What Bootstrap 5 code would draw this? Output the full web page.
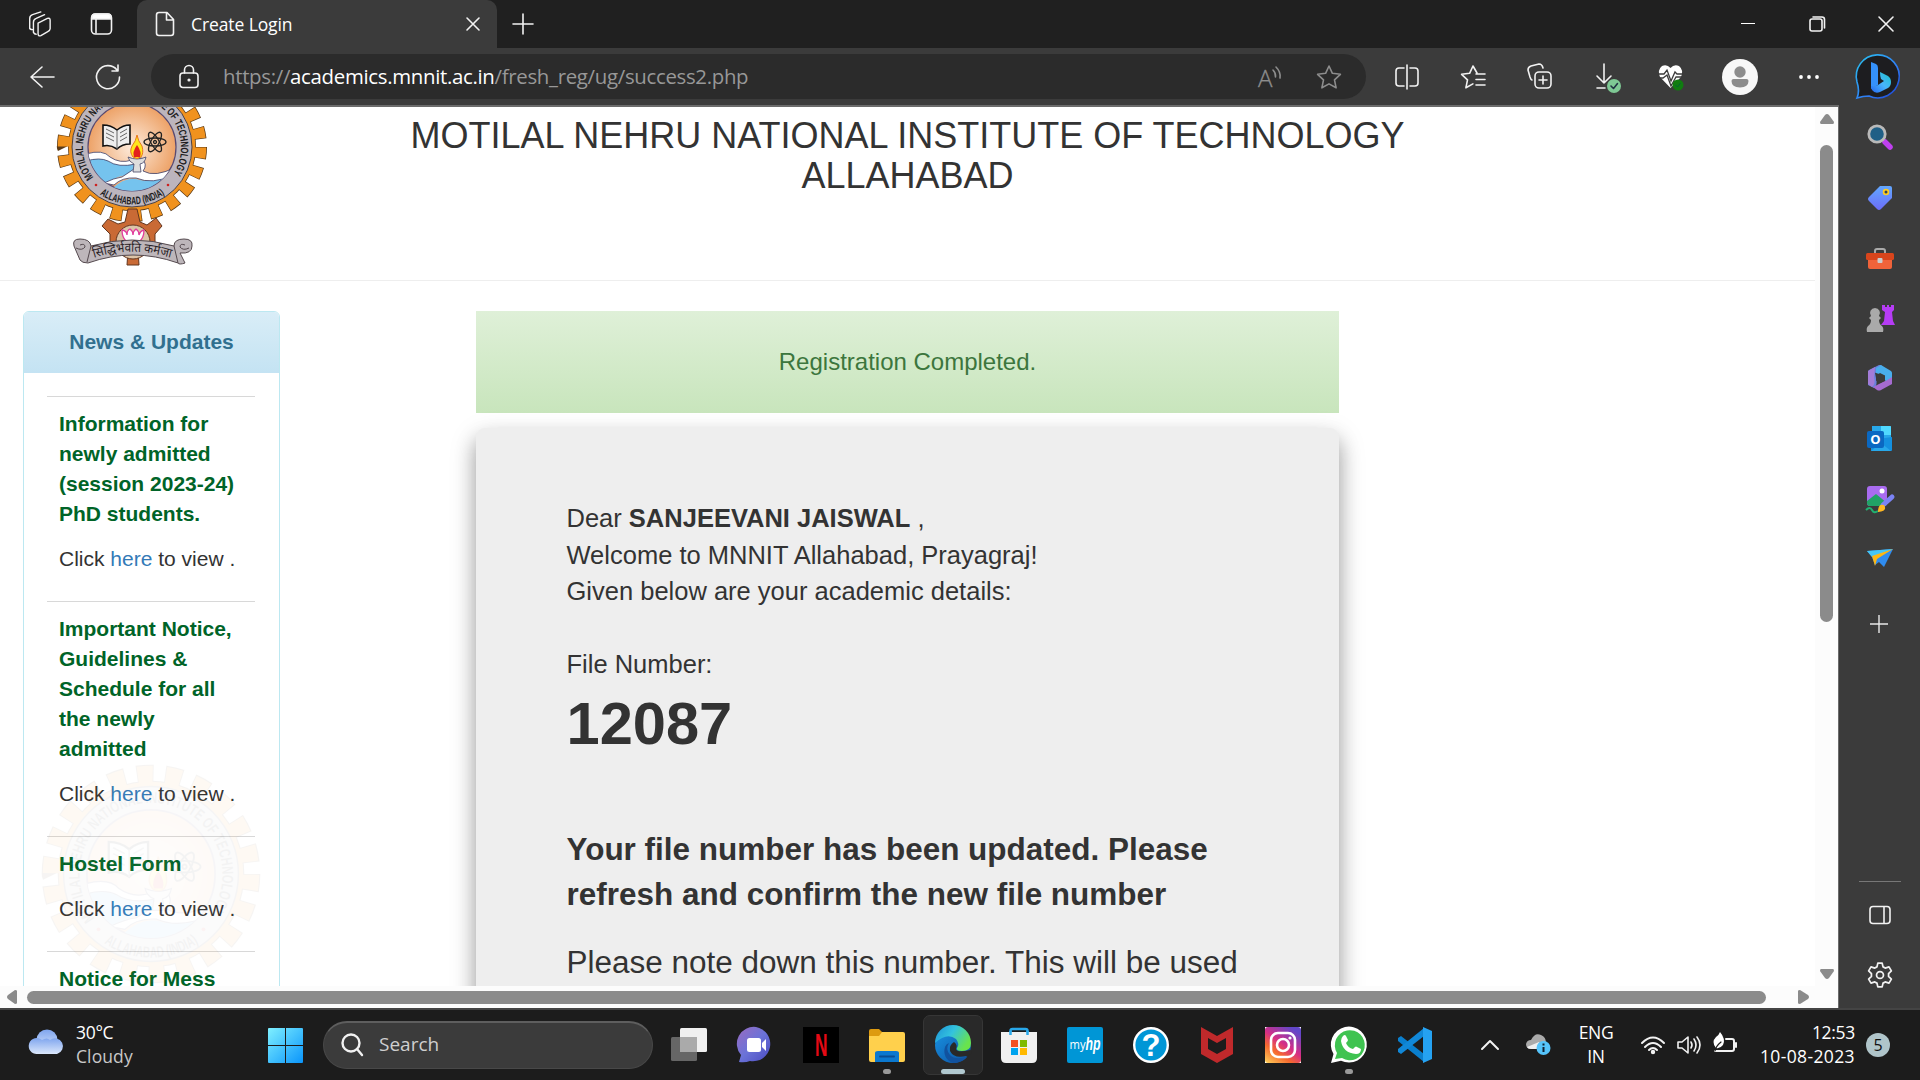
<!DOCTYPE html>
<html lang="en">
<head>
<meta charset="utf-8">
<title>Create Login</title>
<link href="https://cdn.jsdelivr.net/npm/bootstrap@5.3.0/dist/css/bootstrap.min.css" rel="stylesheet">
<style>
html,body{height:100%;overflow:hidden}
body{font-family:"Open Sans","Noto Sans",sans-serif;background:#1c1c1c;color:#fff}
svg{display:block;flex:none;overflow:visible}
.ic{fill:none;stroke:#f2f2f2;stroke-width:1.6;stroke-linecap:round;stroke-linejoin:round}
.dim{stroke:#8d8d8d}
.titlebar{height:48px;background:#202020}
.tools{height:57px;background:#3b3b3b}
.cell{display:flex;align-items:center;justify-content:center;flex:none}
.w66{width:66px}
.tab{width:360px;background:#3b3b3b;border-radius:10px 10px 0 0;padding-left:18px;font-size:17.5px;letter-spacing:-.1px}
.address{width:1215px;height:45px;border-radius:23px;background:#2b2b2b;margin-left:16px;padding-left:29px;font-size:20.4px;letter-spacing:-.31px;color:#989898}
.address b{color:#fff;font-weight:400}
.middle{height:903px;background:#3b3b3b}
.viewer{width:1839px;border-top:2px solid #6b6b6b;border-right:1px solid #6b6b6b}
.page{width:1815px;height:879px;background:#fff;color:#333;font-family:"Liberation Sans",Arial,sans-serif;position:relative;overflow:hidden}
.vbar{width:23px;background:#fcfcfc;padding:7px 4px 7px 5px}
.vthumb{width:13px;height:477px;border-radius:7px;background:#8b8b8b;margin-top:21px}
.hbar{height:22px;background:#fcfcfc;padding:0 29px 0 7px}
.hthumb{width:1739px;height:13px;border-radius:7px;background:#8b8b8b;margin-left:10px}
.masthead{height:174px;border-bottom:1px solid #eee;position:relative}
.masthead h1{width:1080px;font-size:36px;line-height:40px;font-weight:400;margin:9px auto 0;text-align:center}
.crest{position:absolute;left:40px;top:0}
.watermark{position:absolute;left:41px;top:657px;opacity:.048}
.news{width:257px;height:700px;border:1px solid #bce8f1;border-radius:6px;margin-left:23px;font-size:21px;line-height:30px;flex:none;background:transparent;color:#333}
.news-title{height:61px;line-height:59px;background:linear-gradient(#d9edf7,#c4e3f3);border-radius:5px 5px 0 0;color:#31708f;font-weight:700;text-align:center}
.notice{border-top:1px solid #d8d8d8;margin:0 24px 0 23px;padding:12px 11px 27px 12px}
.notice strong{display:block;color:#006428;margin-bottom:15px}
.notice a{color:#337ab7;text-decoration:none}
.main{width:863px;margin-left:196px}
.done{height:102px;background:linear-gradient(#dff0d8,#c8e5bc);color:#3c763d;font-size:24px;margin-bottom:15px}
.letter{height:700px;background:#eee;border-radius:9px;box-shadow:0 12px 20px rgba(0,0,0,.28),0 9px 28px rgba(0,0,0,.17);padding:72px 90.5px;font-size:25.5px;line-height:36.57px}
.fileno{font-size:59.6px;line-height:86px;font-weight:700;margin-top:-2px}
.update{font-size:31.48px;line-height:45.3px;font-weight:700;margin:60px 0 23px}
.below{font-size:31.48px;line-height:45.3px;white-space:nowrap}
.side{width:81px}
.side .cell{height:60px}
.taskbar{height:72px;border-top:2px solid #444;background:#1c1c1c}
.tsm{font-size:17.5px;line-height:24px;letter-spacing:-.3px;position:relative;top:-1.5px}
.searchpill{width:330px;height:48px;border-radius:24px;background:#3b3b3b;border:1px solid #484848;border-top:2px solid #5e5e5e;color:#cfcfcf;font-size:19px;padding-left:16px;letter-spacing:0}
.searchpill span{margin-top:-2px}
.app{width:66px;height:60px;position:relative;display:flex;align-items:center;justify-content:center;flex:none}
.active-app::before{content:"";position:absolute;left:3px;top:0;width:60px;height:60px;border-radius:7px;background:#292929;border:1px solid #363636}
.app svg{position:relative}
.run::after{content:"";position:absolute;bottom:1px;left:29px;width:8px;height:5px;border-radius:3px;background:#999}
.active-app::after{left:21px;width:24px;background:#b0c8cf}
.bell{width:24px;height:24px;border-radius:50%;background:#b0c5ca;color:#111;font-size:16px;line-height:22px}
</style>
<script src="https://cdn.jsdelivr.net/npm/bootstrap@5.3.0/dist/js/bootstrap.bundle.min.js"></script>
</head>
<body class="d-flex flex-column">

<div class="titlebar d-flex align-items-stretch">
  <div class="cell" style="width:78px"><svg class="ic" width="26" height="26" viewBox="0 0 28 28" style="stroke-width:1.500"><path d="M13 13l10-5q3-1 3 2v9q0 2-3 3.500l-7 4q-3 1-3-2z"/><path d="M8 23V12q0-3 3-4l9-4M4 19V8q0-3 3-4l9-3M11 25q-2 0-3-2M7 20q-3 0-3-2"/></svg></div>
  <div class="cell" style="width:48px"><svg class="ic" width="24" height="24" viewBox="0 0 24 24"><rect x="1.500" y="2" width="20" height="20" rx="4"/><path d="M2 7V5q0-3 3-3h13q3 0 3 3v2z" fill="#fff"/><path d="M6 7v14"/></svg></div>
  <div class="tab d-flex align-items-center" style="margin-left:11px">
    <svg class="ic" width="20" height="26" viewBox="0 0 20 26"><path d="M4 1.500h8l6.500 7V22q0 2.500-2.500 2.500H4Q1.500 24.500 1.500 22V4Q1.500 1.500 4 1.500zM11.500 2v7h7"/></svg>
    <span style="margin-left:16px">Create Login</span>
    <svg class="ic ms-auto" style="margin-right:18px" width="12" height="12" viewBox="0 0 12 12"><path d="M0 0l12 12M12 0L0 12"/></svg>
  </div>
  <div class="cell" style="width:51px"><svg class="ic" width="20" height="20" viewBox="0 0 20 20"><path d="M10 0v20M0 10h20"/></svg></div>
  <div class="d-flex ms-auto">
    <div class="cell" style="width:69px"><svg width="14" height="14"><path d="M0 6.500h14" stroke="#fff"/></svg></div>
    <div class="cell" style="width:69px"><svg class="ic" width="16" height="16" viewBox="0 0 16 16"><rect x="1" y="3" width="12" height="12" rx="2"/><path d="M4 1h9q2.500 0 2.500 2.500V12"/></svg></div>
    <div class="cell" style="width:69px"><svg class="ic" width="14" height="14" viewBox="0 0 14 14"><path d="M0 0l14 14M14 0L0 14"/></svg></div>
  </div>
</div>

<div class="tools d-flex align-items-center">
  <div class="cell" style="width:83px"><svg class="ic" width="24" height="22" viewBox="0 0 24 22"><path d="M12 1L1 11l11 10M1 11h23"/></svg></div>
  <div class="cell" style="width:50px"><svg class="ic" width="26" height="26" viewBox="0 0 26 26"><path d="M22 6A11.500 11.500 0 1 0 24.500 13M23 1v6h-6"/></svg></div>
  <div class="address d-flex align-items-center" style="margin-left:18px">
    <svg class="ic" width="18" height="24" viewBox="0 0 18 24"><rect x="0" y="8" width="18" height="14.500" rx="3"/><path d="M4.500 8V5a4.500 4.500 0 0 1 9 0v3"/><circle cx="9" cy="15" r=".8"/></svg>
    <span id="url" style="margin-left:25px">https://<b>academics.mnnit.ac.in</b>/fresh_reg/ug/success2.php</span>
    <svg class="ic dim ms-auto" width="22" height="24" viewBox="0 0 22 24"><text x="-1" y="22" font-size="24" font-family="Open Sans" font-weight="300" fill="#8d8d8d" stroke-width=".3">A</text><path d="M14 5q3 3 2.500 7M17 2q5 5 4 11"/></svg>
    <svg class="ic dim" style="margin:0 25px 0 36px" width="24" height="24" viewBox="0 0 24 24"><path d="M12 1l3.400 7.300 8 1-5.900 5.500 1.600 8L12 18.900l-7.100 3.900 1.600-8L.6 9.300l8-1z"/></svg>
  </div>
  <div class="cell w66" style="margin-left:8px"><svg class="ic" width="24" height="26" viewBox="0 0 24 26"><path d="M9 4H4Q1 4 1 7v12q0 3 3 3h5M15 4h5q3 0 3 3v12q0 3-3 3h-5M12 1v24"/></svg></div>
  <div class="cell w66"><svg class="ic" width="25" height="24" viewBox="0 0 25 24"><path d="M16 8L12 1 8.600 8.300l-8 1 5.900 5.500-1.600 8 7-3.900M15 9h9M15 14.500h9M15 20h9"/></svg></div>
  <div class="cell w66"><svg class="ic" width="25" height="25" viewBox="0 0 25 25"><rect x="8" y="8" width="16" height="16" rx="4"/><path d="M16 12v8M12 16h8M5 16q-1 0-2-3L1 6Q1 3 4 2l8-2q3 0 4 4"/></svg></div>
  <div class="cell" style="width:72px"><svg class="ic" width="26" height="28" viewBox="0 0 26 28"><path d="M9 1v19M2 13l7 7 7-7M2 25h8"/><circle cx="19" cy="23" r="7" fill="#7ec894" stroke="none"/><path d="M16 23l2.500 2.500 4-5" stroke="#234"/></svg></div>
  <div class="cell" style="width:54px"><svg width="26" height="26" viewBox="0 0 26 26"><path d="M12.500 24L2 13Q-1 6 4 2q5-2 8.500 2Q16 0 21 2q5 4 2 11z" fill="#fff"/><path d="M0 10h6l3-4 4 11 4-9 2 2h6M0 14h5l4-3 4 11 5-9h7" fill="none" stroke="#3b3b3b" stroke-width="1.300"/><circle cx="20" cy="21" r="5.500" fill="#107c10"/><path d="M17.500 21l2 2 3-4" fill="none" stroke="#063"/></svg></div>
  <div class="cell" style="width:84px"><svg width="36" height="36"><circle cx="18" cy="18" r="18" fill="#f8f8f8"/><circle cx="18" cy="13" r="5.700" fill="#8d8d8d"/><path d="M9.500 22q0-2 2-2h13q2 0 2 2 0 6-8.500 6.500-8.500-.5-8.500-6.500z" fill="#8d8d8d"/></svg></div>
  <div class="cell" style="width:54px"><svg width="22" height="6" fill="#fff"><circle cx="3" cy="3" r="1.900"/><circle cx="11" cy="3" r="1.900"/><circle cx="19" cy="3" r="1.900"/></svg></div>
  <div class="cell" style="width:84px"><svg width="46" height="46" viewBox="0 0 46 46"><defs><linearGradient id="bg" x1="0" y1="0" x2="1" y2="1"><stop stop-color="#29c5f0"/><stop offset=".6" stop-color="#2f7df5"/><stop offset="1" stop-color="#1b3fd0"/></linearGradient><linearGradient id="bs" x1="0" y1="1" x2="1" y2="0"><stop stop-color="#2468f2"/><stop offset=".5" stop-color="#49b4fb"/><stop offset="1" stop-color="#18c3c8"/></linearGradient></defs><path d="M2 44q3-7 0-16A21.500 21.500 0 1 1 14 42Q8 42 2 44z" fill="#1d1d20" stroke="url(#bg)" stroke-width="1.600"/><path d="M16 8l5 2q2 1 2 4v17l-7 4z" fill="#3591fb"/><path d="M25 18l8 4q3 2 3 6 0 4-3 6l-8 4q-5 2-8-2-1-2-1-4 4 1 7-1l6-4-3-2q-1-3-1-7z" fill="url(#bs)"/></svg></div>
</div>

<div class="middle d-flex">
  <div class="viewer d-flex flex-column">
    <div class="d-flex">
      <div class="page">
        <header class="masthead d-flex">
          <div class="crest"><svg width="200" height="173" viewBox="40 107 200 173">
            <defs>
              <radialGradient id="disc"><stop stop-color="#fdebdc"/><stop offset="1" stop-color="#eda267"/></radialGradient>
              <path id="arcTop" d="M-38.500 30.500A49 49 0 1 1 38.500 30.500"/>
              <path id="arcBot" d="M-40 41A57 57 0 0 0 40 41"/>
              <clipPath id="dc"><circle r="44"/></clipPath>
              <g id="gear">
                <circle r="66" fill="none" stroke="#5b3a16" stroke-width="18" pathLength="220" stroke-dasharray="5.900 4.100"/>
                <circle r="64" fill="#5b3a16"/>
                <circle r="63.300" fill="#f0921e"/>
                <circle r="66" fill="none" stroke="#f0921e" stroke-width="16.500" pathLength="220" stroke-dasharray="5.300 4.700" stroke-dashoffset="-.3"/>
                <circle r="60" fill="#bcb5bd" stroke="#4a4044" stroke-width="1"/>
                <circle r="44" fill="url(#disc)" stroke="#5a4a70" stroke-width="1.200"/>
                <g clip-path="url(#dc)">
                  <path d="M-44 9Q-28 3-22 12-12 19 0 15L9 17Q0 28-14 30L-26 36-44 28z" fill="#75c3ee"/>
                  <path d="M-20 42Q-8 30 4 32 20 38 42 24L30 44H-20z" fill="#75c3ee"/>
                  <path d="M-46 7Q-29 2-22 10-12 17 0 13l10-2q6 7 1 13 12 7 33-4l-2 8Q20 38 4 31-10 30-18 38l-10-2Q-18 31-10 30-4 26 2 22L4 17Q-14 21-24 14-32 10-46 14z" fill="#fff" stroke="#3b3d66" stroke-width=".8"/>
                </g>
                <path d="M-29-22q8 0 14 5 6-5 13-5V-3q-8 0-13 5-7-5-14-3z" fill="#eee" stroke="#111" stroke-width="1.600"/>
                <path d="M-15-17V2M-26-18l8 4M-26-14l8 4M-26-10l8 4M-5-18l-7 4M-5-14l-7 4M-5-10l-7 4" stroke="#666" fill="none"/>
                <g fill="none" stroke="#222" stroke-width="1.300" transform="translate(23 -5)"><ellipse rx="11" ry="4"/><ellipse rx="11" ry="4" transform="rotate(60)"/><ellipse rx="11" ry="4" transform="rotate(120)"/><circle r="1.500"/></g>
                <path d="M-4 10q9 4 18 0-1 6-6 7l1 8H1l1-8q-5-2-6-7z" fill="#ddd" stroke="#446" stroke-width=".8"/>
                <path d="M5-12q1 6 5 11 2 7-1 11-4 3-8 0-4-5-1-11 4-5 5-11z" fill="#ffe51c" stroke="#e9761c"/><path d="M5-2q5 7 3 12H2Q0 5 5-2z" fill="#e3211c"/>
                <g font-family="Liberation Sans" font-weight="700" font-size="10.800" fill="#201c20"><text><textPath href="#arcTop" textLength="214" lengthAdjust="spacingAndGlyphs">MOTILAL NEHRU NATIONAL INSTITUTE OF TECHNOLOGY</textPath></text><text><textPath href="#arcBot" startOffset="10" textLength="69" lengthAdjust="spacingAndGlyphs">ALLAHABAD (INDIA)</textPath></text></g>
                <circle cx="-36" cy="38" r="1.300" fill="#c22"/><circle cx="36" cy="38" r="1.300" fill="#c22"/>
              </g>
            </defs>
            <use href="#gear" transform="translate(132 147)"/>
            <path d="M128 209h9l3 13 7 3 9-7 6 8-7 8v12l-17 4 1 15h-12l1-15-18-4v-12l-8-8 6-7 10 5 7-2z" fill="#c96a35" stroke="#63361f"/>
            <circle cx="133" cy="242" r="17" fill="#dcc4a8" stroke="#63361f"/>
            <path d="M122 230q5 1 5 5 0-5 3-6 3 2 3 6 0-4 3-6 3 2 3 6 1-4 5-5 0 8-5 12h-12q-5-4-5-12z" fill="#fff" stroke="#e23a9c" stroke-width="1.300"/>
            <path d="M74 246q-2-7 6-7 10 0 11 7 41-12 83 0 0-7 10-7 9 0 8 7 0 8-12 7l5 10q-6 2-7 0-45-16-90 0-6 0-8-3z" fill="#bdb6ba" stroke="#54494e"/>
            <path d="M91 246l-4 16M174 246l4 17M76 248q6 3 9-1 0-4-5-2M189 248q-6 3-9-1 0-4 5-2" fill="none" stroke="#54494e"/>
            <path id="ribbonBase" d="M94 258q38-13 80 1" fill="none"/>
            <text font-family="Noto Sans Devanagari,Noto Sans,sans-serif" font-size="13" fill="#2a2226"><textPath href="#ribbonBase" textLength="78" lengthAdjust="spacingAndGlyphs">सिद्धिर्भवति कर्मजा</textPath></text>
          </svg></div>
          <h1>MOTILAL NEHRU NATIONAL INSTITUTE OF TECHNOLOGY ALLAHABAD</h1>
        </header>
        <div class="watermark"><svg width="220" height="220" viewBox="-75.500 -75.500 151 151"><use href="#gear"/></svg></div>
        <div class="d-flex align-items-start" style="padding-top:30px">
          <aside class="news">
            <div class="news-title">News &amp; Updates</div>
            <div style="padding-top:23px">
              <div class="notice"><strong>Information for newly admitted (session 2023-24) PhD students.</strong>Click <a href="#">here</a> to view .</div>
              <div class="notice"><strong>Important Notice, Guidelines &amp; Schedule for all the newly admitted</strong>Click <a href="#">here</a> to view .</div>
              <div class="notice"><strong>Hostel Form</strong>Click <a href="#">here</a> to view .</div>
              <div class="notice"><strong>Notice for Mess</strong></div>
            </div>
          </aside>
          <main class="main">
            <div class="done d-flex align-items-center justify-content-center">Registration Completed.</div>
            <div class="letter">
              <div>Dear <b>SANJEEVANI JAISWAL</b> ,<br>Welcome to MNNIT Allahabad, Prayagraj!<br>Given below are your academic details:<br><br>File Number:</div>
              <div class="fileno">12087</div>
              <div class="update">Your file number has been updated. Please refresh and confirm the new file number</div>
              <div class="below">Please note down this number. This will be used</div>
            </div>
          </main>
        </div>
      </div>
      <div class="vbar d-flex flex-column">
        <svg width="14" height="10" fill="#8b8b8b"><path d="M7 0q1 0 2 1l5 7q0 2-1 2H1Q0 10 0 8l5-7q1-1 2-1z"/></svg>
        <div class="vthumb"></div>
        <svg class="mt-auto" width="14" height="10" fill="#8b8b8b"><path d="M7 10q1 0 2-1l5-7q0-2-1-2H1Q0 0 0 2l5 7q1 1 2 1z"/></svg>
      </div>
    </div>
    <div class="hbar d-flex align-items-center">
      <svg width="10" height="14" fill="#8b8b8b"><path d="M0 7q0-1 1-2l7-5q2 0 2 1v12q0 1-2 1L1 9Q0 8 0 7z"/></svg>
      <div class="hthumb"></div>
      <svg class="ms-auto" width="11" height="14" fill="#8b8b8b"><path d="M11 7q0-1-1-2L2 0Q0 0 0 1v12q0 1 2 1l8-5q1-1 1-2z"/></svg>
    </div>
  </div>

  <div class="side d-flex flex-column" style="padding-top:2px">
    <div class="cell"><svg width="26" height="26" viewBox="0 0 26 26"><path d="M18 18l5 5" stroke="#c040f0" stroke-width="5.500" stroke-linecap="round"/><circle cx="10" cy="10" r="8.200" fill="#1f5f86" stroke="#b9b9b9" stroke-width="2.800"/></svg></div>
    <div class="cell" style="height:62px"><svg width="26" height="26" viewBox="0 0 26 26"><defs><linearGradient id="tg" x2="0" y2="1"><stop stop-color="#62a8ff"/><stop offset="1" stop-color="#6c6cf8"/></linearGradient></defs><path d="M13 1h10q2 0 2 2v10L14 24q-2 2-4 0L2 16q-2-2 0-4z" fill="url(#tg)"/><circle cx="19" cy="7" r="2.400" fill="#345" stroke="#ffcc20" stroke-width="1.800"/></svg></div>
    <div class="cell"><svg width="28" height="24" viewBox="0 0 28 24"><path d="M9 7V4q0-2 2-2h6q2 0 2 2v3" fill="none" stroke="#aaa" stroke-width="2"/><path d="M2 11h24v9q0 2-2 2H4q-2 0-2-2z" fill="#f0633a"/><rect x="0" y="6" width="28" height="7" rx="1.500" fill="#d9451c"/><rect x="11.500" y="11" width="5" height="5" rx="1" fill="#ccc"/></svg></div>
    <div class="cell" style="height:58px"><svg width="28" height="28" viewBox="0 0 28 28"><path d="M16 1h3v2h2V1h2v2h2V1h3v5l-2 2 1 9 2 4H15l3-4 1-9-3-2z" fill="#b63cf5"/><path d="M9 4a5 5 0 0 1 4 8l2 2-2 2q0 4 3 6 2 2 1 6H1q-1-4 1-6 3-2 3-6l-2-2 2-2A5 5 0 0 1 9 4z" fill="#aaa"/></svg></div>
    <div class="cell" style="height:62px"><svg width="26" height="28" viewBox="0 0 26 28"><path d="M12 1L2 6q-1 1-1 2v13l6 3q4-3 2-10L8 9l9-3-3-5z" fill="#6a80dd"/><path d="M8 3L1 7v13l4 3q4-3 2-10z" fill="#a37cd8"/><path d="M14 1l10 6q1 1 1 2v11q-5 1-7-4V12L9 9V4z" fill="#49aeec"/><path d="M25 13v7l-11 6q-2 1-4 0l-4-3 10-5q5-2 9-5z" fill="#a66bd0"/><path d="M13 9l5 2.500v5L13 19l-4-2.500v-5z" fill="#3b3b3b"/></svg></div>
    <div class="cell"><svg width="26" height="26" viewBox="0 0 26 26"><path d="M5 0h18q1 0 1 1v15H5z" fill="#28a8ea"/><path d="M14 0h9q1 0 1 1v8H14z" fill="#50d9ff"/><path d="M4 14l21-3v13q0 1-1 1H4z" fill="#1490df"/><path d="M4 25h20l-10-8z" fill="#28a8ea"/><rect x="0" y="5" width="17" height="17" rx="2" fill="#0a68c2"/><text x="8.500" y="18" text-anchor="middle" font-family="Open Sans" font-weight="700" font-size="13" fill="#fff">O</text></svg></div>
    <div class="cell" style="height:59px"><svg width="28" height="28" viewBox="0 0 28 28"><rect x="1" y="1" width="20" height="20" rx="3" fill="#a96cf0"/><path d="M1 16l9-7 11 9q0 3-3 3H4q-3 0-3-3z" fill="#21a366"/><circle cx="16" cy="6" r="2.500" fill="#fff"/><path d="M0 25q4-4 6 0t6 1" stroke="#21b070" stroke-width="2" fill="none"/><path d="M17 20l9-8" stroke="#7b83f5" stroke-width="5" stroke-linecap="round"/><path d="M12 27q0-9 6-7 4 6-6 7z" fill="#ffb822"/></svg></div>
    <div class="cell"><svg width="26" height="20" viewBox="0 0 26 20"><path d="M0 3l26-2-9 18-5-5-4 3-3-8z" fill="#2f8cf0"/><path d="M0 3l26-2L5 9z" fill="#45c6f5"/><path d="M26 1L5 8l3 10 2-7z" fill="#fdb714"/></svg></div>
    <div class="cell" style="height:71px;padding-right:2px"><svg width="18" height="18"><path d="M9 0v18M0 9h18" stroke="#e8e8e8" stroke-width="1.400"/></svg></div>
    <div class="mt-auto mx-auto" style="width:42px;height:1px;background:#777"></div>
    <div class="cell" style="height:66px"><svg class="ic" width="22" height="20" viewBox="0 0 22 20"><rect x="1" y="1.500" width="20" height="17" rx="3"/><path d="M15 2v16"/></svg></div>
    <div class="cell" style="height:54px;margin-bottom:6px"><svg class="ic" width="26" height="26" viewBox="0 0 24 24"><circle cx="12" cy="12" r="3.200"/><path d="M10 1h4l.8 3.500 2 1.100L20.300 4.500l2.200 3.700-2.600 2.500v2.600l2.600 2.500-2.200 3.700-3.500-1.100-2 1.100L14 23h-4l-.8-3.500-2-1.100-3.500 1.100-2.200-3.700 2.600-2.500v-2.600L1.500 8.200l2.200-3.700 3.500 1.100 2-1.100z"/></svg></div>
  </div>
</div>

<div class="taskbar d-flex align-items-center">
  <div class="d-flex align-items-center" style="width:268px;padding-left:29px">
    <svg width="36" height="26" viewBox="0 0 36 26" style="margin-top:-7px"><defs><linearGradient id="cg" x2="0" y2="1"><stop stop-color="#7fa5ee"/><stop offset="1" stop-color="#dbe7fb"/></linearGradient></defs><circle cx="18" cy="11" r="10.500" fill="url(#cg)"/><path d="M8 25a8 8 0 1 1 5-14q5-3 8 0a8 8 0 1 1 7 14z" fill="url(#cg)"/></svg>
    <div class="tsm" style="margin-left:11px">30°C<br><span style="color:#c8c8c8;letter-spacing:.1px">Cloudy</span></div>
  </div>
  <svg width="35" height="35" viewBox="0 0 35 35"><defs><linearGradient id="wg" x2="1" y2="1"><stop stop-color="#7ff0ff"/><stop offset="1" stop-color="#0a95fb"/></linearGradient></defs><path fill="url(#wg)" d="M1 0h16v17H0V1q0-1 1-1zM18 0h16q1 0 1 1v16H18zM0 18h17v17H1q-1 0-1-1zM18 18h17v16q0 1-1 1H18z"/></svg>
  <div class="searchpill d-flex align-items-center" style="margin-left:20px">
    <svg class="ic" width="24" height="24" viewBox="0 0 24 24" style="stroke-width:2.400;margin-top:-2px"><circle cx="11" cy="10" r="8.500"/><path d="M17 16l5 6"/></svg>
    <span style="margin-left:15px">Search</span>
  </div>
  <div class="d-flex" style="margin-left:3px">
    <div class="app"><svg width="36" height="36"><rect x="0" y="10" width="26" height="24" rx="1.500" fill="#666"/><rect x="9" y="1" width="27" height="24" rx="1.500" fill="#f0f0f0"/><path d="M9 10h17v15H9z" fill="#aaa"/></svg></div>
    <div class="app"><svg width="36" height="36"><defs><linearGradient id="tm" x2="1" y2="1"><stop stop-color="#9a6bc0"/><stop offset=".5" stop-color="#6b73d8"/><stop offset="1" stop-color="#4a4ac0"/></linearGradient></defs><path transform="translate(1)" d="M18 0a17 17 0 1 1-6 34q-5 2-11 1l2-7A17 17 0 0 1 18 0z" fill="url(#tm)"/><rect x="10" y="11" width="14" height="14" rx="2.500" fill="#fff"/><path d="M25 16l4-4v12l-4-4z" fill="#fff"/></svg></div>
    <div class="app"><svg width="36" height="36"><path d="M0 0h36v36H0z" fill="#000"/><text x="12" y="29" textLength="12.500" lengthAdjust="spacingAndGlyphs" font-family="Liberation Sans" font-weight="700" font-size="31" fill="#e50914">N</text></svg></div>
    <div class="app run"><svg width="36" height="36"><path d="M0 4q0-2 2-2h8l4 4v4H0z" fill="#dd9a10"/><path d="M13 5h21q2 0 2 2v26q0 2-2 2H2q-2 0-2-2V9h10z" fill="#ffd04c"/><path d="M6 35V26q0-2 3-2h18q3 0 3 2v9z" fill="#0b78cf"/><path d="M11 29.500h14" stroke="#0a4d91" stroke-width="2" stroke-linecap="round"/></svg></div>
    <div class="app run active-app"><svg width="36" height="36" viewBox="0 0 36 36"><defs><linearGradient id="eg" x1="0" x2="1" y2=".5"><stop stop-color="#1b8fd8"/><stop offset=".5" stop-color="#33c3de"/><stop offset="1" stop-color="#69e34c"/></linearGradient><linearGradient id="eb" x2="1" y2="1"><stop stop-color="#1996e6"/><stop offset="1" stop-color="#0c4f9f"/></linearGradient></defs><circle cx="18" cy="18" r="18" fill="url(#eb)"/><path d="M0 16A18 18 0 0 1 36 16q0 8-9 8-6 0-5-3 3-4-1-9Q12 5 0 16z" fill="url(#eg)"/><path d="M14 16q-4 6 1 12 6 6 18 1-5 7-15 7Q7 31 10 20q1-3 4-4z" fill="#11529f"/><path d="M19 15q4 3 2 7 1 4 14 1l2 2-4 5-2-1q-12 3-16-5-1-6 4-9z" fill="#292929"/></svg></div>
    <div class="app"><svg width="36" height="36"><path d="M9.500 8V4q0-2 2-2h13q2 0 2 2v4" fill="none" stroke="#28a8ea" stroke-width="2.500"/><path d="M0 5h36v26q0 5-5 5H5q-5 0-5-5z" fill="#f0f0f0"/><path d="M9.500 8V4M26.500 8V4" stroke="#28a8ea" stroke-width="2.500"/><path d="M10 13h7v7h-7z" fill="#f25022"/><path d="M19 13h7v7h-7z" fill="#7fba00"/><path d="M10 21h7v7h-7z" fill="#00a4ef"/><path d="M19 21h7v7h-7z" fill="#ffb900"/></svg></div>
    <div class="app"><svg width="36" height="36"><rect width="36" height="36" rx="2" fill="#0096d6"/><text x="2.500" y="22" font-family="Open Sans" font-size="12" fill="#fff" textLength="16" lengthAdjust="spacingAndGlyphs">my</text><text x="18.500" y="22.500" font-family="Liberation Sans" font-style="italic" font-weight="700" font-size="18" fill="#fff" textLength="15" lengthAdjust="spacingAndGlyphs">hp</text></svg></div>
    <div class="app"><svg width="36" height="36"><circle cx="18" cy="18" r="16.800" fill="#0096d6" stroke="#fff" stroke-width="2.400"/><text x="18" y="29" text-anchor="middle" font-family="Liberation Sans" font-weight="700" font-size="31" fill="#fff">?</text></svg></div>
    <div class="app"><svg width="36" height="36"><path d="M2 0l16 9 16-9v27l-16 9-16-9zM9 11v11l9 5 9-5V11l-9 5z" fill="#c0292b" fill-rule="evenodd"/></svg></div>
    <div class="app"><svg width="36" height="36"><defs><linearGradient id="ig" x1="0" y1="1" x2=".7" y2="0"><stop stop-color="#ffd45c"/><stop offset=".35" stop-color="#f6692f"/><stop offset=".6" stop-color="#d62e86"/><stop offset="1" stop-color="#6247c9"/></linearGradient></defs><path d="M0 0h36v36H0z" fill="#fff"/><rect width="36" height="36" rx="3" fill="url(#ig)"/><g fill="none" stroke="#fff" stroke-width="2.600"><rect x="6" y="6" width="24" height="24" rx="7"/><circle cx="18" cy="18" r="6"/></g><circle cx="25" cy="11" r="1.600" fill="#fff"/></svg></div>
    <div class="app run"><svg width="36" height="36"><path d="M0 36l2.500-9A18 18 0 1 1 10 33.800z" fill="#fff"/><path d="M4 32l2-6A15 15 0 1 1 11 31z" fill="#3fc351"/><path d="M12 9q2-2 3 0l2 4q0 1-2 3 2 5 7 6l2-2q1-1 2 0l4 2q0 5-5 5Q12 26 10 14q0-3 2-5z" fill="#fff"/></svg></div>
    <div class="app"><svg width="36" height="36"><path d="M1 11l3-2 23 18v8L1 14z" fill="#0a7fce"/><path d="M1 25l3 2L27 9V1L1 22z" fill="#1188d8"/><path d="M26 0l9 4v28l-9 4z" fill="#25a2f2"/></svg></div>
  </div>
  <div class="d-flex align-items-center ms-auto" style="padding-right:30px">
    <svg class="ic" width="16" height="9" viewBox="0 0 16 9" style="stroke-width:2;margin-top:-2px"><path d="M0 9l8-8 8 8"/></svg>
    <svg width="25" height="22" viewBox="0 0 25 22" style="margin-left:28px"><path d="M5 15q-5 0-5-5 1-4 5-4 4-8 10-5 5 2 5 8v6z" fill="#aaa"/><path d="M1 13l12-5 3 7H5q-3 0-4-2z" fill="#eee"/><circle cx="17.500" cy="14" r="7" fill="#55c4fb"/><path d="M17.500 9.500v2M17.500 13v5" stroke="#123" stroke-width="2"/></svg>
    <div class="tsm text-center" style="width:36px;margin-left:27px">ENG<br>IN</div>
    <svg class="ic" width="24" height="18" viewBox="0 0 24 18" style="margin-left:27px;stroke-width:2"><path d="M1 7q11-11 22 0M4 11q8-8 16 0M8 14q4-4 8 0"/><circle cx="12" cy="16" r="1.200" fill="#fff"/></svg>
    <svg class="ic" width="24" height="20" viewBox="0 0 24 20" style="margin-left:12px"><path d="M1 7h4l6-5v16l-6-5H1zM14 7q2 3 0 6M17 4q4 6 0 12M20 2q6 8 0 16"/></svg>
    <svg class="ic" width="24" height="20" viewBox="0 0 24 20" style="margin-left:12px;margin-top:-3px"><path d="M13 5h6q2 0 2 2v8q0 2-2 2H2M23 9v4" stroke-width="2"/><path d="M7-2q6 7 3 13-3 4-7 3-5-6 0-11 3-2 4-5z" fill="#fff" stroke="none"/><path d="M2 17q1-5 6-9" stroke="#1c1c1c" stroke-width="1.200"/></svg>
    <div class="tsm text-end" style="width:96px;margin-left:22px;white-space:nowrap;letter-spacing:0"><span style="letter-spacing:-.3px">12:53</span><br><span style="letter-spacing:.38px">10-08-2023</span></div>
    <div class="bell d-flex align-items-center justify-content-center" style="margin-left:11px">5</div>
  </div>
</div>
</body>
</html>
